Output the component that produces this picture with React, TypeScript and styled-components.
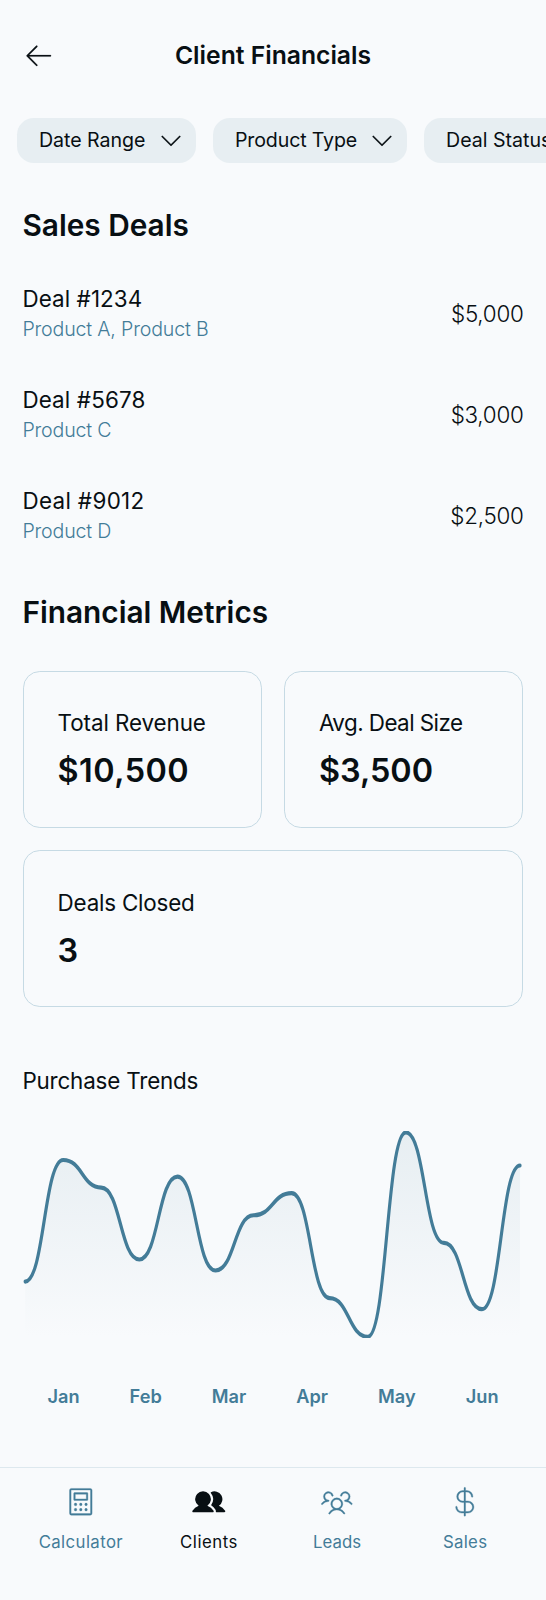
import React from 'react';
import styled, { createGlobalStyle } from 'styled-components';
import { PiArrowLeftLight, PiCaretDownLight, PiCalculatorLight, PiUsersFill, PiUsersThreeLight, PiCurrencyDollarLight } from 'react-icons/pi';

const Global = createGlobalStyle`
  *{box-sizing:border-box}
  body{margin:0;background:#f8fafc;color:#080f13;font-family:Inter,"Liberation Sans",sans-serif}
  h1,h2,p{margin:0}
`;
const Page = styled.div`
  height:1600px;width:546px;overflow:hidden;display:flex;flex-direction:column;
  > *{flex-shrink:0}
`;
const Header = styled.header`display:flex;align-items:center;height:112px;padding:0 22.4px;svg{display:block}`;
const HeaderSide = styled.div`width:34px;flex:none;`;
const Label = styled.span<{ $s: number; $w?: number; $ls?: number; $lh?: number }>`
  display:block;white-space:nowrap;
  font-size:${p => p.$s}px;font-weight:${p => p.$w ?? 400};
  letter-spacing:${p => p.$ls ?? 0}px;line-height:${p => p.$lh ?? 30}px;
`;
const HeaderTitle = styled.div`flex:1;display:flex;justify-content:center;padding-bottom:2px;`;
const Chips = styled.div`display:flex;gap:17px;padding:5.8px 0 0 17px;height:80px;align-items:flex-start;`;
const Chip = styled.button<{ $w: number }>`
  flex:none;width:${p => p.$w}px;height:44.8px;border:0;border-radius:16.8px;background:#e7eef2;color:inherit;font-family:inherit;
  display:flex;align-items:center;justify-content:space-between;padding:0 11px 0 22px;
`;
const Section = styled.h2<{ $gap?: number }>`height:70.6px;margin-top:${p => p.$gap ?? 0}px;padding:14.4px 22.4px 0;`;
const Deal = styled.div`height:101px;padding:0 22.4px;display:flex;align-items:center;justify-content:space-between;`;
const Amount = styled.div`padding-top:2px;`;
const Muted = styled.div`color:#437c98;`;
const Cards = styled.div`display:grid;grid-template-columns:1fr 1fr;gap:22.4px;padding:21.8px 22.6px 22.4px 23px;`;
const Card = styled.div<{ $wide?: boolean }>`
  grid-column:${p => (p.$wide ? '1 / -1' : 'auto')};height:157px;border:1.4px solid #c6dae4;border-radius:16.8px;padding:34.8px 33.6px 0;
  display:flex;flex-direction:column;gap:10px;
`;
const ChartTitle = styled.div`padding:36.6px 22.4px 0;`;
const Chart = styled.svg`display:block;width:501.2px;height:207.2px;margin:35px 22px 0 22.4px;`;
const Months = styled.div`display:flex;justify-content:space-around;margin-top:42.6px;padding:0 22.4px;color:#437c98;`;
const Nav = styled.nav`margin-top:auto;height:133px;border-top:1px solid #dde8ee;display:flex;gap:11.2px;padding:17px 22.4px 0;`;
const NavItem = styled.div<{ $active?: boolean }>`
  flex:1;display:flex;flex-direction:column;align-items:center;gap:8px;color:${p => (p.$active ? '#080f13' : '#437c98')};
`;

const chips = [
  { text: 'Date Range', width: 179, spacing: -0.05 },
  { text: 'Product Type', width: 194, spacing: -0.15 },
  { text: 'Deal Status', width: 180, spacing: 0 },
];
const deals = [
  { name: 'Deal #1234', products: 'Product A, Product B', amount: '$5,000', spacing: 0.1 },
  { name: 'Deal #5678', products: 'Product C', amount: '$3,000', spacing: 0.15 },
  { name: 'Deal #9012', products: 'Product D', amount: '$2,500', spacing: 0.35 },
];
const metrics = [
  { name: 'Total Revenue', value: '$10,500', spacing: -0.08, valueSpacing: 0.45 },
  { name: 'Avg. Deal Size', value: '$3,500', spacing: -0.55, valueSpacing: 0 },
  { name: 'Deals Closed', value: '3', spacing: -0.2, valueSpacing: 0, wide: true },
];
const tabs = [
  { name: 'Calculator', Icon: PiCalculatorLight, spacing: 0.4, stroke: 2.5 },
  { name: 'Clients', Icon: PiUsersFill, spacing: 0.5, stroke: 0, active: true },
  { name: 'Leads', Icon: PiUsersThreeLight, spacing: 0, stroke: 2.5 },
  { name: 'Sales', Icon: PiCurrencyDollarLight, spacing: 0.3, stroke: 2.5 },
];

const values = [109, 21, 41, 93, 33, 101, 61, 45, 121, 149, 1, 81, 129, 25];
const step = 472 / 13;
const line = values.slice(1).reduce((d, y, i) => {
  const mid = (i + 0.5) * step;
  return `${d} C${mid} ${values[i]} ${mid} ${y} ${(i + 1) * step} ${y}`;
}, `M0 ${values[0]}`);

export default function App() {
  return (
    <Page>
      <Global />
      <Header>
        <HeaderSide><PiArrowLeftLight size={33.6} strokeWidth={1.5} /></HeaderSide>
        <HeaderTitle><Label as="h1" $s={24.7} $w={600}>Client Financials</Label></HeaderTitle>
        <HeaderSide />
      </Header>
      <Chips>
        {chips.map(c => (
          <Chip key={c.text} $w={c.width}><Label $s={19.6} $ls={c.spacing}>{c.text}</Label><PiCaretDownLight size={28} strokeWidth={2.5} /></Chip>
        ))}
      </Chips>
      <Section><Label $s={29.8} $w={600} $lh={38}>Sales Deals</Label></Section>
      {deals.map(d => (
        <Deal key={d.name}>
          <div>
            <Label $s={22.4} $lh={31} $ls={d.spacing}>{d.name}</Label>
            <Muted><Label $s={19.6} $w={300} $ls={-0.17}>{d.products}</Label></Muted>
          </div>
          <Amount><Label $s={22.4} $w={300} $ls={-0.25}>{d.amount}</Label></Amount>
        </Deal>
      ))}
      <Section $gap={12.6}><Label $s={29.8} $w={600} $lh={38}>Financial Metrics</Label></Section>
      <Cards>
        {metrics.map(m => (
          <Card key={m.name} $wide={m.wide}>
            <Label $s={22.4} $lh={34} $ls={m.spacing}>{m.name}</Label>
            <Label $s={32.4} $w={620} $lh={42} $ls={m.valueSpacing}>{m.value}</Label>
          </Card>
        ))}
      </Cards>
      <ChartTitle><Label $s={22.4} $ls={-0.17}>Purchase Trends</Label></ChartTitle>
      <Chart viewBox="-3 0 478 150" preserveAspectRatio="none">
        <defs>
          <linearGradient id="fade" x1="0" y1="1" x2="0" y2="149" gradientUnits="userSpaceOnUse">
            <stop stopColor="#e7eef2" /><stop offset="1" stopColor="#e7eef2" stopOpacity="0" />
          </linearGradient>
        </defs>
        <path d={`${line} V149 H0 Z`} fill="url(#fade)" />
        <path d={line} fill="none" stroke="#437c98" strokeWidth="3" strokeLinecap="round" />
      </Chart>
      <Months>{['Jan', 'Feb', 'Mar', 'Apr', 'May', 'Jun'].map(m => <Label key={m} $s={18.2} $w={600}>{m}</Label>)}</Months>
      <Nav>
        {tabs.map(({ name, Icon, spacing, stroke, active }) => (
          <NavItem key={name} $active={active}><Icon size={33.6} strokeWidth={stroke} /><Label $s={16.8} $ls={spacing}>{name}</Label></NavItem>
        ))}
      </Nav>
    </Page>
  );
}
